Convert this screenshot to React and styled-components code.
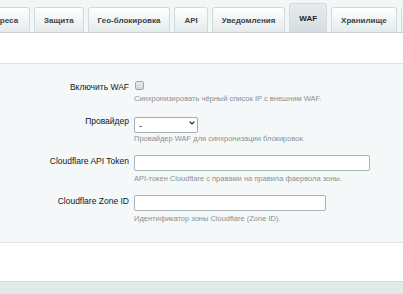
import React from 'react';
import styled, { createGlobalStyle } from 'styled-components';

const GlobalStyle = createGlobalStyle`
    html, body {
        margin: 0;
        padding: 0;
        background: #e2e9eb;
    }
    body {
        font-family: "Liberation Sans", Arial, sans-serif;
        overflow: hidden;
    }
`

const Page = styled.div`
    width: 403px;
    height: 294px;
    display: flex;
    flex-direction: column;
    overflow: hidden;
    background: #e2e9eb;
`

const TabBar = styled.div`
    height: 32px;
    flex-shrink: 0;
    display: flex;
    align-items: flex-end;
    gap: 4px;
    margin-left: -21px;
    background: #f3f6f7;
    border-bottom: 1px solid #c9d1d4;
    white-space: nowrap;
`

const Tab = styled.div`
    flex-shrink: 0;
    height: ${p => (p.$active ? '29px' : '25px')};
    padding: ${p => (p.$active ? '0 9px' : '1px 9px 0')};
    display: flex;
    align-items: center;
    box-sizing: border-box;
    border: 1px solid #d3dadd;
    border-bottom: none;
    border-radius: 3px 3px 0 0;
    background: ${p => (p.$active
        ? 'linear-gradient(#e6ebed, #d5dde0)'
        : 'linear-gradient(#ffffff, #e4eaec)')};
    font-size: 8px;
    font-weight: bold;
    color: ${p => (p.$active ? '#1f2628' : '#3b4345')};
`

const FirstTab = styled(Tab)`
    padding-right: 11px;
`

const TopPanel = styled.div`
    height: 30px;
    flex-shrink: 0;
    background: #ffffff;
    border-bottom: 1px solid #dce2e4;
`

const Content = styled.div`
    flex-shrink: 0;
    background: #f5f8f9;
    padding: 16px 0 7px;
    border-bottom: 1px solid #dfe5e7;
`

const Row = styled.div`
    display: grid;
    grid-template-columns: 129px 1fr;
    column-gap: 5px;
    align-items: start;
    margin-bottom: 11px;
`

const Label = styled.div`
    text-align: right;
    font-size: 8.5px;
    line-height: 10px;
    padding-top: ${p => p.$pt || '2px'};
    color: #111618;
`

const Control = styled.div`
    display: flex;
    flex-direction: column;
    align-items: flex-start;
`

const Hint = styled.div`
    font-size: 7.5px;
    line-height: 10px;
    margin-top: ${p => p.$mt || '3px'};
    color: #899093;
    white-space: nowrap;
`

const Checkbox = styled.input.attrs({ type: 'checkbox' })`
    appearance: none;
    margin: 1px 0 0 1px;
    width: 9px;
    height: 9px;
    box-sizing: border-box;
    border: 1px solid #9fa8ac;
    border-radius: 2px;
    background: linear-gradient(#e8ecee, #cdd4d7);
`

const SelectWrap = styled.div`
    position: relative;
    width: 64px;
    height: 16px;
`

const Select = styled.select`
    appearance: none;
    width: 100%;
    height: 100%;
    margin: 0;
    padding: 1px 0 0 4px;
    box-sizing: border-box;
    border: 1px solid #a4adb1;
    border-radius: 2px;
    background: #ffffff;
    font-family: inherit;
    font-size: 9px;
    line-height: 14px;
    color: #111;
    outline: none;
`

const Chevron = styled.svg`
    position: absolute;
    right: 3px;
    top: 6px;
    pointer-events: none;
`

const TextInput = styled.input`
    width: ${p => p.$w};
    height: 16px;
    margin: 0;
    box-sizing: border-box;
    border: 1px solid #a9b2b6;
    border-radius: 2px;
    background: #ffffff;
    outline: none;
    font-size: 9px;
`

const Footer = styled.div`
    height: 38px;
    flex-shrink: 0;
    background: #ffffff;
    border-bottom: 1px solid #d2dadd;
`

const Bottom = styled.div`
    flex: 1;
    background: #e2e9eb;
`

const tabs = ['Защита', 'Гео-блокировка', 'API', 'Уведомления', 'WAF', 'Хранилище', 'Журнал'];

export default function App() {
    return (
        <Page>
            <GlobalStyle />
            <TabBar>
                <FirstTab>Адреса</FirstTab>
                {tabs.map(t => (
                    <Tab key={t} $active={t === 'WAF'}>{t}</Tab>
                ))}
            </TabBar>
            <TopPanel />
            <Content>
                <Row>
                    <Label>Включить WAF</Label>
                    <Control>
                        <Checkbox />
                        <Hint $mt="4px">Синхронизировать чёрный список IP с внешним WAF.</Hint>
                    </Control>
                </Row>
                <Row>
                    <Label $pt="1px">Провайдер</Label>
                    <Control>
                        <SelectWrap>
                            <Select defaultValue="-">
                                <option value="-">-</option>
                                <option value="cf">Cloudflare</option>
                            </Select>
                            <Chevron width="6" height="4" viewBox="0 0 6 4">
                                <path d="M0.7 0.7 L3 3 L5.3 0.7" fill="none" stroke="#222" strokeWidth="1.2" />
                            </Chevron>
                        </SelectWrap>
                        <Hint>Провайдер WAF для синхронизации блокировок.</Hint>
                    </Control>
                </Row>
                <Row>
                    <Label $pt="1px">Cloudflare API Token</Label>
                    <Control>
                        <TextInput $w="236px" />
                        <Hint>API-токен Cloudflare с правами на правила фаервола зоны.</Hint>
                    </Control>
                </Row>
                <Row>
                    <Label $pt="1px">Cloudflare Zone ID</Label>
                    <Control>
                        <TextInput $w="192px" />
                        <Hint>Идентификатор зоны Cloudflare (Zone ID).</Hint>
                    </Control>
                </Row>
            </Content>
            <Footer />
            <Bottom />
        </Page>
    );
}
